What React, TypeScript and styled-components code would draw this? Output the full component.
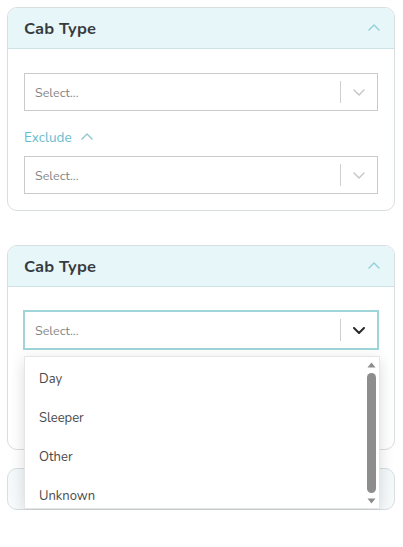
import React from "react";
import styled, { createGlobalStyle } from "styled-components";

const Global = createGlobalStyle`
  html, body { margin: 0; padding: 0; background: #fff; }
  body { font-family: "Nunito", Lato, "Open Sans", sans-serif; }
  * { box-sizing: border-box; }
`;

const Page = styled.div`
  padding: 7px 8px 0 7px;
  display: flex;
  flex-direction: column;
`;

const Card = styled.div<{ $mt?: number; $collapsed?: boolean }>`
  position: relative;
  margin-top: ${(p) => p.$mt ?? 0}px;
  border: 1px solid #d9dee1;
  border-radius: 10px;
  background: #fff;
  height: ${(p) => (p.$collapsed ? "42px" : "auto")};
  ${(p) => (p.$collapsed ? "background: linear-gradient(#f3f8fa, #f8fbfc);" : "")}
`;

const Header = styled.div`
  height: 41px;
  display: flex;
  align-items: center;
  justify-content: space-between;
  padding: 0 14px 0 16px;
  background: #e7f6f9;
  border-bottom: 1px solid #cde2e7;
  border-radius: 9px 9px 0 0;
`;

const Title = styled.div`
  font-size: 16.5px;
  font-weight: 700;
  color: #373b3e;
  letter-spacing: 0.15px;
`;

const Body = styled.div`
  padding: 24px 16px 16px 16px;
`;

const SelectBox = styled.div<{ $focused?: boolean }>`
  height: 38px;
  display: flex;
  align-items: center;
  border: 1px solid ${(p) => (p.$focused ? "#9fd4d9" : "#cacaca")};
  box-shadow: ${(p) => (p.$focused ? "0 0 0 1px #9fd4d9" : "none")};
  background: #fff;
`;

const Placeholder = styled.div`
  flex: 1;
  padding-left: 10px;
  font-size: 12.5px;
  color: #858585;
`;

const Sep = styled.div`
  width: 1px;
  height: 22px;
  background: #cfcfcf;
`;

const Indicator = styled.div`
  width: 36px;
  display: flex;
  align-items: center;
  justify-content: center;
`;

const ExcludeRow = styled.div`
  display: flex;
  align-items: center;
  gap: 9px;
  height: 20px;
  margin: 16px 0 9px;
  font-size: 13.5px;
  color: #67bccb;
`;

const Spacer = styled.div`
  height: 84px;
`;

const Menu = styled.div`
  position: absolute;
  left: 16px;
  right: 14px;
  top: 110px;
  height: 153px;
  background: #fff;
  border: 1px solid #e6e6e6;
  box-shadow: 0 4px 14px rgba(0, 0, 0, 0.14);
  display: flex;
  z-index: 5;
  overflow: hidden;
`;

const List = styled.div`
  flex: 1;
  padding-top: 2px;
`;

const Option = styled.div`
  height: 39px;
  display: flex;
  align-items: center;
  padding-left: 14px;
  font-size: 13px;
  color: #4a4a4a;
`;

const ScrollBar = styled.div`
  width: 15px;
  display: flex;
  flex-direction: column;
  align-items: center;
  padding: 5px 0 4px;
  gap: 5px;
`;

const Thumb = styled.div`
  flex: 1;
  width: 9px;
  border-radius: 5px;
  background: #8d8d8d;
`;

const Up = ({ color, w = 12, sw = 1.4 }: { color: string; w?: number; sw?: number }) => (
  <svg width={w} height={w * 0.6} viewBox="0 0 12 7">
    <path d="M1 6 L6 1 L11 6" fill="none" stroke={color} strokeWidth={sw} strokeLinecap="round" strokeLinejoin="round" />
  </svg>
);

const Down = ({ color, sw = 1.4 }: { color: string; sw?: number }) => (
  <svg width={12} height={7} viewBox="0 0 12 7">
    <path d="M1 1 L6 6 L11 1" fill="none" stroke={color} strokeWidth={sw} strokeLinecap="round" strokeLinejoin="round" />
  </svg>
);

const Tri = ({ up }: { up?: boolean }) => (
  <svg width={9} height={6} viewBox="0 0 9 6">
    <path d={up ? "M0.5 5.5 L4.5 0.5 L8.5 5.5 Z" : "M0.5 0.5 L4.5 5.5 L8.5 0.5 Z"} fill="#8d8d8d" />
  </svg>
);

const Select = ({ focused }: { focused?: boolean }) => (
  <SelectBox $focused={focused}>
    <Placeholder>Select...</Placeholder>
    <Sep />
    <Indicator>{focused ? <Down color="#2b2b2b" sw={2} /> : <Down color="#c4c4c4" />}</Indicator>
  </SelectBox>
);

const Section = ({ open, mt }: { open?: boolean; mt?: number }) => (
  <Card $mt={mt}>
    <Header>
      <Title>Cab Type</Title>
      <Up color="#8fcfd8" />
    </Header>
    <Body>
      <Select focused={open} />
      {open ? (
        <Spacer />
      ) : (
        <>
          <ExcludeRow>
            Exclude <Up color="#8fc6cf" />
          </ExcludeRow>
          <Select />
        </>
      )}
    </Body>
    {open && (
      <Menu>
        <List>
          {["Day", "Sleeper", "Other", "Unknown"].map((o) => (
            <Option key={o}>{o}</Option>
          ))}
        </List>
        <ScrollBar>
          <Tri up />
          <Thumb />
          <Tri />
        </ScrollBar>
      </Menu>
    )}
  </Card>
);

export default function App() {
  return (
    <>
      <Global />
      <Page>
        <Section />
        <Section open mt={34} />
        <Card $mt={18} $collapsed />
      </Page>
    </>
  );
}
